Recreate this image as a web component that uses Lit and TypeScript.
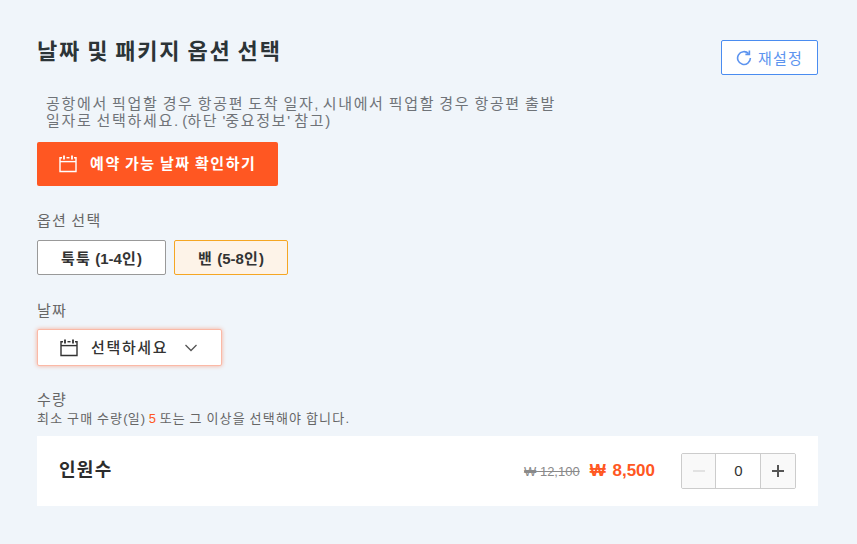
import { LitElement, html, css } from 'lit';
import { customElement } from 'lit/decorators.js';

const calendar = (color: string) => html`
  <svg width="18" height="18" viewBox="0 0 18 18" fill="none" stroke=${color} stroke-width="1.4">
    <path d="M3 2.7H1V16.5H17V2.7H15" />
    <path d="M1 6.6H17" />
    <path d="M7.5 2.7H10.5" />
    <path d="M5 0.5V4.5M13 0.5V4.5" stroke-width="1.8" />
  </svg>
`;

@customElement('app-root')
export class AppRoot extends LitElement {
  static styles = css`
    :host {
      display: block;
      min-height: 544px;
      background: #f0f5fa;
      font-family: 'Liberation Sans', 'Noto Sans CJK KR', sans-serif;
      color: #333;
    }

    /* hangul in the shot runs a full em wide, Noto is 0.92em */
    .page {
      padding: 40px 39px 38px 37px;
      display: flex;
      flex-direction: column;
      letter-spacing: 0.08em;
      word-spacing: -0.08em;
    }

    .l {
      letter-spacing: 0;
      word-spacing: 0;
    }

    .head {
      display: flex;
      justify-content: space-between;
      align-items: flex-start;
      height: 55px;
    }

    h2 {
      margin: 0;
      padding-bottom: 2px;
      font-size: 22px;
      line-height: 24px;
      font-weight: 700;
      letter-spacing: 1.78px;
      word-spacing: -1.78px;
      color: #2c3437;
    }

    .reset {
      box-sizing: border-box;
      width: 97px;
      height: 35px;
      padding-bottom: 1px;
      display: flex;
      align-items: center;
      justify-content: center;
      gap: 6px;
      background: #fff;
      border: 1px solid #4a8cf0;
      border-radius: 2px;
      color: #5d94ef;
      font-size: 15px;
    }

    .reset svg {
      margin-top: 2px;
    }

    .desc {
      margin: 0 0 13px 9px;
      width: 516px;
      font-size: 15px;
      line-height: 17px;
      letter-spacing: 1.67px;
      word-spacing: -1.67px;
      color: #6f7378;
    }

    .cta {
      box-sizing: border-box;
      width: 241px;
      height: 44px;
      display: flex;
      align-items: center;
      gap: 13px;
      padding-left: 22px;
      background: #ff5722;
      border-radius: 2px;
      color: #fff;
      font-size: 15px;
      font-weight: 700;
    }

    .cta span {
      padding-bottom: 3px;
      letter-spacing: 1.6px;
      word-spacing: -1.6px;
    }

    .label {
      margin-top: 26px;
      font-size: 15px;
      line-height: 18px;
      color: #666;
    }

    .chips {
      display: flex;
      gap: 8px;
      margin-top: 10px;
    }

    .chip {
      box-sizing: border-box;
      height: 35px;
      padding-bottom: 1px;
      display: flex;
      align-items: center;
      justify-content: center;
      border-radius: 2px;
      font-size: 15px;
      font-weight: 700;
      color: #333;
      white-space: pre;
    }

    .chip.off {
      width: 129px;
      background: #fff;
      border: 1px solid #999;
    }

    .chip.on {
      width: 114px;
      background: #fdf3e8;
      border: 1px solid #f5a623;
    }

    .label.date {
      margin-top: 27px;
    }

    .select {
      box-sizing: border-box;
      width: 185px;
      height: 37px;
      margin-top: 9px;
      display: flex;
      align-items: center;
      padding-left: 22px;
      background: #fff;
      border: 1px solid #fbb9a6;
      border-radius: 2px;
      box-shadow: 0 0 4px rgba(255, 87, 34, 0.45);
      font-size: 15px;
      font-weight: 500;
      color: #333;
    }

    .select span {
      margin-left: 13px;
      padding-bottom: 3px;
      letter-spacing: 1.65px;
      word-spacing: -1.65px;
    }

    .select svg.chev {
      margin-left: 16px;
    }

    .label.qty {
      margin-top: 25px;
    }

    .hint {
      padding-top: 1px;
      font-size: 13px;
      line-height: 17px;
      letter-spacing: 1.22px;
      word-spacing: -1.22px;
      color: #666;
    }

    .hint b {
      font-weight: 400;
      color: #ff5722;
    }

    .row {
      margin-top: 9px;
      height: 70px;
      display: flex;
      align-items: center;
      padding: 0 22px;
      background: #fff;
    }

    .row .name {
      flex: 1;
      padding-bottom: 7px;
      font-size: 18px;
      font-weight: 700;
      color: #2c2c2c;
    }

    .old {
      font-size: 13px;
      color: #8a8a8a;
      text-decoration: line-through;
    }

    .price {
      margin-left: 10px;
      font-size: 17px;
      font-weight: 700;
      word-spacing: 2px;
      color: #ff5722;
    }

    .stepper {
      box-sizing: border-box;
      width: 115px;
      height: 36px;
      margin-left: 26px;
      display: flex;
      border: 1px solid #ccc;
      border-radius: 2px;
      overflow: hidden;
    }

    .stepper > div {
      display: flex;
      align-items: center;
      justify-content: center;
    }

    .btn {
      width: 33px;
      background: #f9f9f9;
    }

    .btn.minus {
      color: #e2e2e2;
    }

    .btn.plus {
      width: 34px;
      color: #555;
    }

    .val {
      flex: 1;
      padding: 0 0 1px 1px;
      background: #fff;
      border-left: 1px solid #ccc;
      border-right: 1px solid #ccc;
      font-size: 15px;
      color: #333;
    }
  `;

  render() {
    return html`
      <div class="page">
        <div class="head">
          <h2>날짜 및 패키지 옵션 선택</h2>
          <div class="reset">
            <svg width="16" height="16" viewBox="0 0 16 16" fill="none" stroke="#5d94ef" stroke-width="1.6">
              <path d="M12.6 3.6A6.4 6.4 0 1 0 14.4 8" />
              <path d="M13.4 0.4V4.4H9.4" />
            </svg>
            재설정
          </div>
        </div>
        <p class="desc">공항에서 픽업할 경우 항공편 도착 일자<span class="l">,</span> 시내에서 픽업할 경우 항공편 출발 일자로 선택하세요<span class="l">. (</span>하단 <span class="l">'</span>중요정보<span class="l">'</span> 참고<span class="l">)</span></p>
        <div class="cta">${calendar('#fff')}<span>예약 가능 날짜 확인하기</span></div>
        <div class="label">옵션 선택</div>
        <div class="chips">
          <div class="chip off"><span>툭툭 <span class="l">(1-4</span>인<span class="l">)</span></span></div>
          <div class="chip on"><span>밴 <span class="l">(5-8</span>인<span class="l">)</span></span></div>
        </div>
        <div class="label date">날짜</div>
        <div class="select">
          ${calendar('#333')}
          <span>선택하세요</span>
          <svg class="chev" width="14" height="8" viewBox="0 0 14 8" fill="none" stroke="#555" stroke-width="1.3">
            <path d="M1.5 1L7 6.5L12.5 1" />
          </svg>
        </div>
        <div class="label qty">수량</div>
        <div class="hint">최소 구매 수량<span class="l">(</span>일<span class="l">) </span><b class="l">5</b> 또는 그 이상을 선택해야 합니다<span class="l">.</span></div>
        <div class="row">
          <div class="name">인원수</div>
          <div class="old l">₩ 12,100</div>
          <div class="price l">₩ 8,500</div>
          <div class="stepper">
            <div class="btn minus">
              <svg width="12" height="2" viewBox="0 0 12 2"><path d="M0 1H12" stroke="currentColor" stroke-width="2" /></svg>
            </div>
            <div class="val l">0</div>
            <div class="btn plus">
              <svg width="12" height="12" viewBox="0 0 12 12"><path d="M0 6H12M6 0V12" stroke="currentColor" stroke-width="2" /></svg>
            </div>
          </div>
        </div>
      </div>
    `;
  }
}
